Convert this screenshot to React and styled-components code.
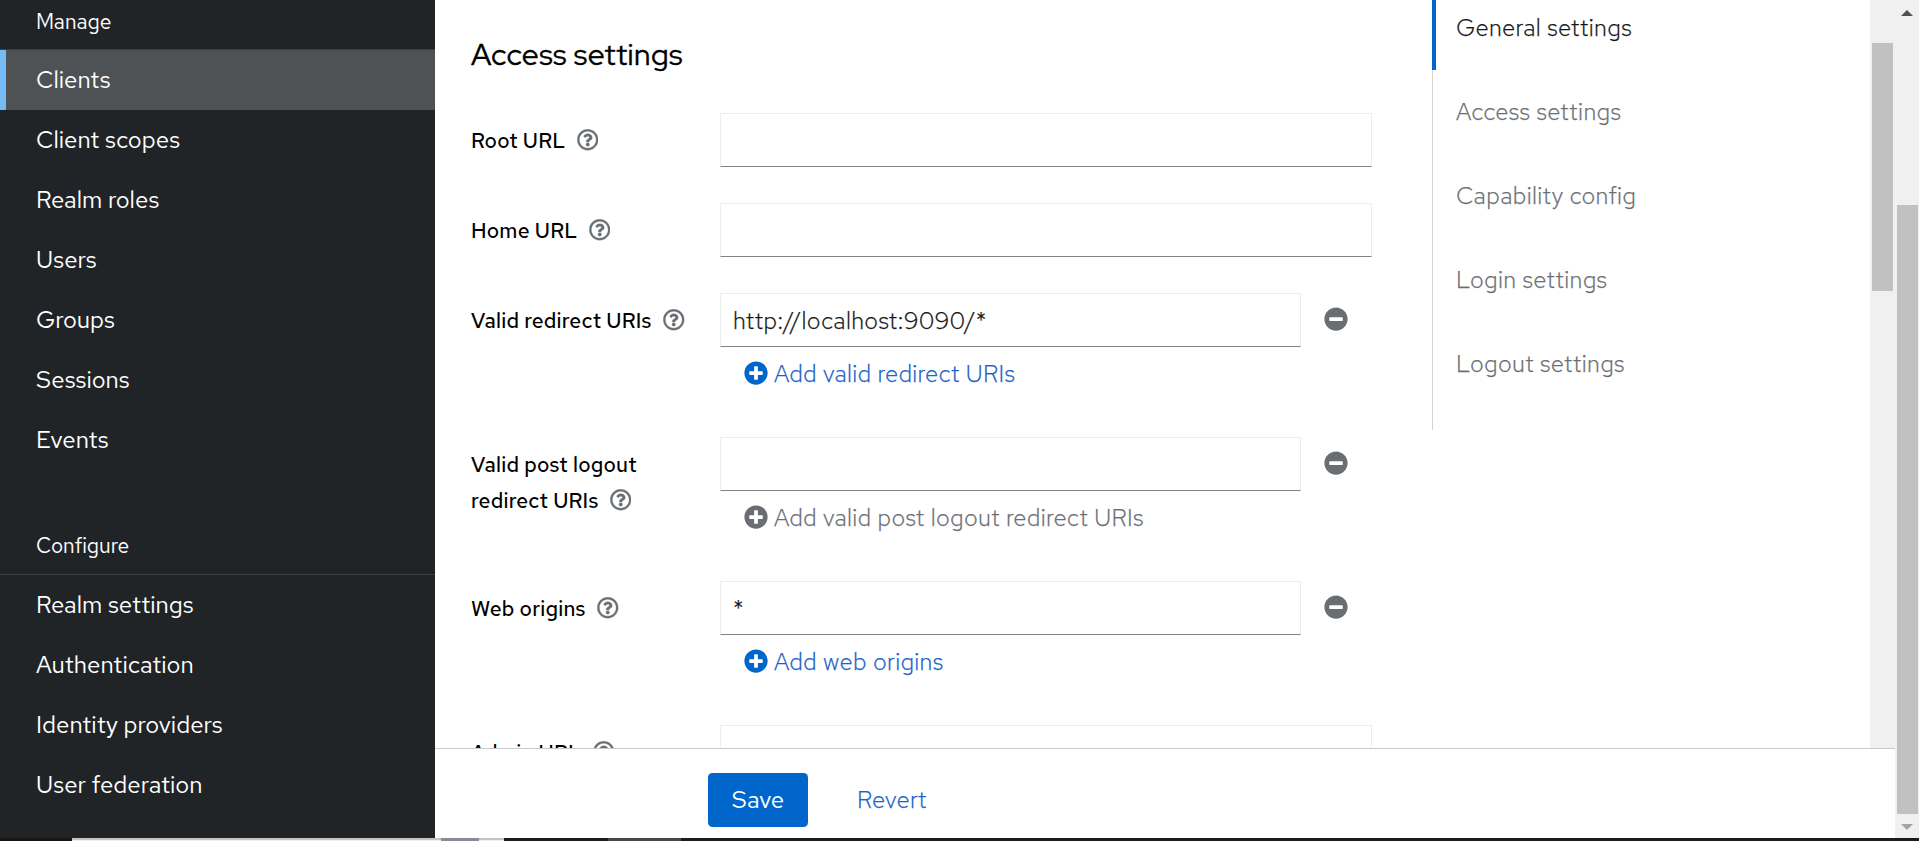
import React from "react";
import styled, { createGlobalStyle, css } from "styled-components";
import { FaMinusCircle, FaPlusCircle, FaRegQuestionCircle } from "react-icons/fa";

const GlobalStyle = createGlobalStyle`
  * { box-sizing: border-box; }
  body {
    margin: 0;
    overflow: hidden;
    background: #fff;
    font-family: "Red Hat Text", Inter, "Liberation Sans", sans-serif;
    color: #151515;
  }
`;

const lightText = css`
  font-size: 24px;
  font-weight: 300;
  letter-spacing: 0.33px;
  -webkit-text-stroke: 0.25px currentColor;
`;

const Screen = styled.div`
  display: flex;
  flex-direction: column;
  width: 1919px;
  height: 841px;
  overflow: hidden;
`;

const Page = styled.div`
  display: flex;
  height: 838px;
  overflow: hidden;
`;

const Sidebar = styled.nav`
  flex: none;
  width: 435px;
  background: #212427;
  color: #fff;
`;

const NavTitle = styled.h2`
  display: flex;
  align-items: center;
  height: ${(p) => p.$height}px;
  margin: 0;
  padding: ${(p) => p.$top}px 0 ${(p) => p.$bottom}px 36px;
  border-bottom: 1px solid #3c3f42;
  font-size: 21px;
  font-weight: 400;
`;

const NavList = styled.ul`
  margin: 0;
  padding: 0;
  list-style: none;
`;

const NavItem = styled.li`
  display: flex;
  align-items: center;
  height: 60px;
  padding: 0 0 2px ${(p) => (p.$current ? 30 : 36)}px;
  border-left: ${(p) => (p.$current ? "6px solid #73bcf7" : "0")};
  background: ${(p) => (p.$current ? "#4f5255" : "transparent")};
  font-size: 24px;
`;

const Main = styled.main`
  display: flex;
  flex-direction: column;
  width: 1460px;
`;

const ScrollArea = styled.div`
  display: flex;
  height: 748px;
  overflow: hidden;
`;

const Form = styled.form`
  width: 997px;
  padding: 36px 60px 0 36px;
`;

const Heading = styled.h1`
  height: 36px;
  margin: 0 0 41px;
  font-family: "Red Hat Display", "Red Hat Text", Inter, sans-serif;
  font-size: 30px;
  font-weight: 400;
  letter-spacing: 0.42px;
  -webkit-text-stroke: 0.3px currentColor;
  line-height: 36px;
  color: #000;
`;

const Field = styled.div`
  display: flex;
  height: ${(p) => (p.$multi ? 144 : 90)}px;
`;

const FieldLabel = styled.label`
  flex: none;
  width: 249px;
  padding-top: 9px;
  font-size: 21px;
  font-weight: 500;
  letter-spacing: 0.22px;
  line-height: 36px;
  color: #000;
`;

const LabelLine = styled.div`
  display: flex;
  align-items: center;
  gap: 11.5px;
  height: 36px;
  white-space: nowrap;
  svg {
    width: 21.5px;
    height: 21.5px;
    color: #6a6e73;
    stroke: currentColor;
    stroke-width: 8px;
  }
`;

const LabelText = styled.span`
  padding-top: 1px;
`;

const Control = styled.div`
  flex: 1;
`;

const InputRow = styled.div`
  display: flex;
  align-items: flex-start;
`;

const Input = styled.div`
  display: flex;
  align-items: center;
  width: ${(p) => (p.$multi ? 581 : 652)}px;
  height: 54px;
  padding-left: 12px;
  border: 1px solid #ededed;
  border-bottom-color: #808386;
  ${lightText}
`;

const RemoveButton = styled.span`
  display: flex;
  padding: 14px 0 0 23px;
  color: #6a6e73;
  svg { width: 24px; height: 24px; }
`;

const AddButton = styled.span`
  display: flex;
  align-items: center;
  gap: 6px;
  height: 52px;
  padding-left: 24px;
  color: ${(p) => (p.$disabled ? "#6a6e73" : "#1a62c8")};
  white-space: nowrap;
  ${lightText}
  svg {
    width: 24px;
    height: 24px;
    color: ${(p) => (p.$disabled ? "#6a6e73" : "#06c")};
  }
`;

const JumpLinks = styled.ul`
  align-self: flex-start;
  width: 438px;
  height: 430px;
  margin: 0;
  padding: 0;
  border-left: 1px solid #d2d2d2;
  list-style: none;
  ${lightText}
`;

const JumpLink = styled.li`
  display: flex;
  align-items: center;
  height: 84px;
  padding: 0 0 2px ${(p) => (p.$current ? 20 : 23)}px;
  color: ${(p) => (p.$current ? "#151515" : "#6a6e73")};
  ${(p) =>
    p.$current &&
    css`
      height: 70px;
      margin-left: -1px;
      padding-bottom: 16px;
      border-left: 4px solid #06c;
    `}
`;

const Track = styled.div`
  flex: none;
  display: flex;
  flex-direction: column;
  align-items: center;
  width: ${(p) => p.$width}px;
  background: #f0f0f0;
`;

const Thumb = styled.div`
  width: 21px;
  height: ${(p) => p.$height}px;
  margin-top: ${(p) => p.$top}px;
  background: #c1c1c1;
`;

const Arrow = styled.svg`
  width: 12px;
  height: 6px;
  margin-top: 10px;
  fill: ${(p) => p.$color};
`;

const Footer = styled.footer`
  display: flex;
  align-items: flex-start;
  gap: 49px;
  height: 90px;
  padding: 24px 0 0 273px;
  border-top: 1px solid #cacaca;
  font-size: 24px;
`;

const SaveButton = styled.button`
  width: 100px;
  height: 54px;
  padding: 0 0 2px;
  border: 0;
  border-radius: 4.5px;
  background: #06c;
  color: #fff;
  font: inherit;
`;

const RevertButton = styled.span`
  display: flex;
  align-items: center;
  height: 52px;
  color: #1a62c8;
  ${lightText}
`;

const Taskbar = styled.div`
  display: flex;
  height: 3px;
  background: #1c1a1c;
`;

const TaskSegment = styled.div`
  width: ${(p) => p.$width}px;
  background: ${(p) => p.$color};
  border-top: ${(p) => (p.$edge ? "2px solid #c4c4c4" : "0")};
`;

const manage = ["Clients", "Client scopes", "Realm roles", "Users", "Groups", "Sessions", "Events"];

const configure = ["Realm settings", "Authentication", "Identity providers", "User federation"];

const fields = [
  { label: ["Root URL"] },
  { label: ["Home URL"] },
  {
    label: ["Valid redirect URIs"],
    value: "http://localhost:9090/*",
    add: "Add valid redirect URIs",
  },
  {
    label: ["Valid post logout", "redirect URIs"],
    add: "Add valid post logout redirect URIs",
    disabled: true,
  },
  { label: ["Web origins"], value: "*", add: "Add web origins" },
  { label: ["Admin URL"] },
];

const sections = [
  "General settings",
  "Access settings",
  "Capability config",
  "Login settings",
  "Logout settings",
];

function FormField({ field }) {
  const multi = Boolean(field.add);
  return (
    <Field $multi={multi}>
      <FieldLabel>
        {field.label.map((text, i) => (
          <LabelLine key={text}>
            <LabelText>{text}</LabelText>
            {i === field.label.length - 1 && <FaRegQuestionCircle />}
          </LabelLine>
        ))}
      </FieldLabel>
      <Control>
        <InputRow>
          <Input $multi={multi}>{field.value}</Input>
          {multi && (
            <RemoveButton>
              <FaMinusCircle />
            </RemoveButton>
          )}
        </InputRow>
        {multi && (
          <AddButton $disabled={field.disabled}>
            <FaPlusCircle />
            {field.add}
          </AddButton>
        )}
      </Control>
    </Field>
  );
}

export default function App() {
  return (
    <Screen>
      <GlobalStyle />
      <Page>
        <Sidebar>
          <NavTitle $height={50} $top={0} $bottom={6}>
            Manage
          </NavTitle>
          <NavList>
            {manage.map((text, i) => (
              <NavItem key={text} $current={i === 0}>
                {text}
              </NavItem>
            ))}
          </NavList>
          <NavTitle $height={105} $top={47} $bottom={0}>
            Configure
          </NavTitle>
          <NavList>
            {configure.map((text) => (
              <NavItem key={text}>{text}</NavItem>
            ))}
          </NavList>
        </Sidebar>
        <Main>
          <ScrollArea>
            <Form>
              <Heading>Access settings</Heading>
              {fields.map((field) => (
                <FormField key={field.label[0]} field={field} />
              ))}
            </Form>
            <JumpLinks>
              {sections.map((text, i) => (
                <JumpLink key={text} $current={i === 0}>
                  {text}
                </JumpLink>
              ))}
            </JumpLinks>
            <Track $width={25}>
              <Thumb $top={43} $height={248} />
            </Track>
          </ScrollArea>
          <Footer>
            <SaveButton type="button">Save</SaveButton>
            <RevertButton>Revert</RevertButton>
          </Footer>
        </Main>
        <Track $width={24}>
          <Arrow viewBox="0 0 12 6" $color="#505050">
            <path d="M0 6 6 0l6 6z" />
          </Arrow>
          <Thumb $top={189} $height={609} />
          <Arrow viewBox="0 0 12 6" $color="#a3a3a3">
            <path d="M0 0h12L6 6z" />
          </Arrow>
        </Track>
      </Page>
      <Taskbar>
        <TaskSegment $width={72} $color="#151515" />
        <TaskSegment $width={369} $color="#f0f0f0" $edge />
        <TaskSegment $width={38} $color="#8f8794" />
        <TaskSegment $width={25} $color="#f0f0f0" $edge />
        <TaskSegment $width={104} $color="#1c1a1c" />
        <TaskSegment $width={73} $color="#4a4849" />
      </Taskbar>
    </Screen>
  );
}
